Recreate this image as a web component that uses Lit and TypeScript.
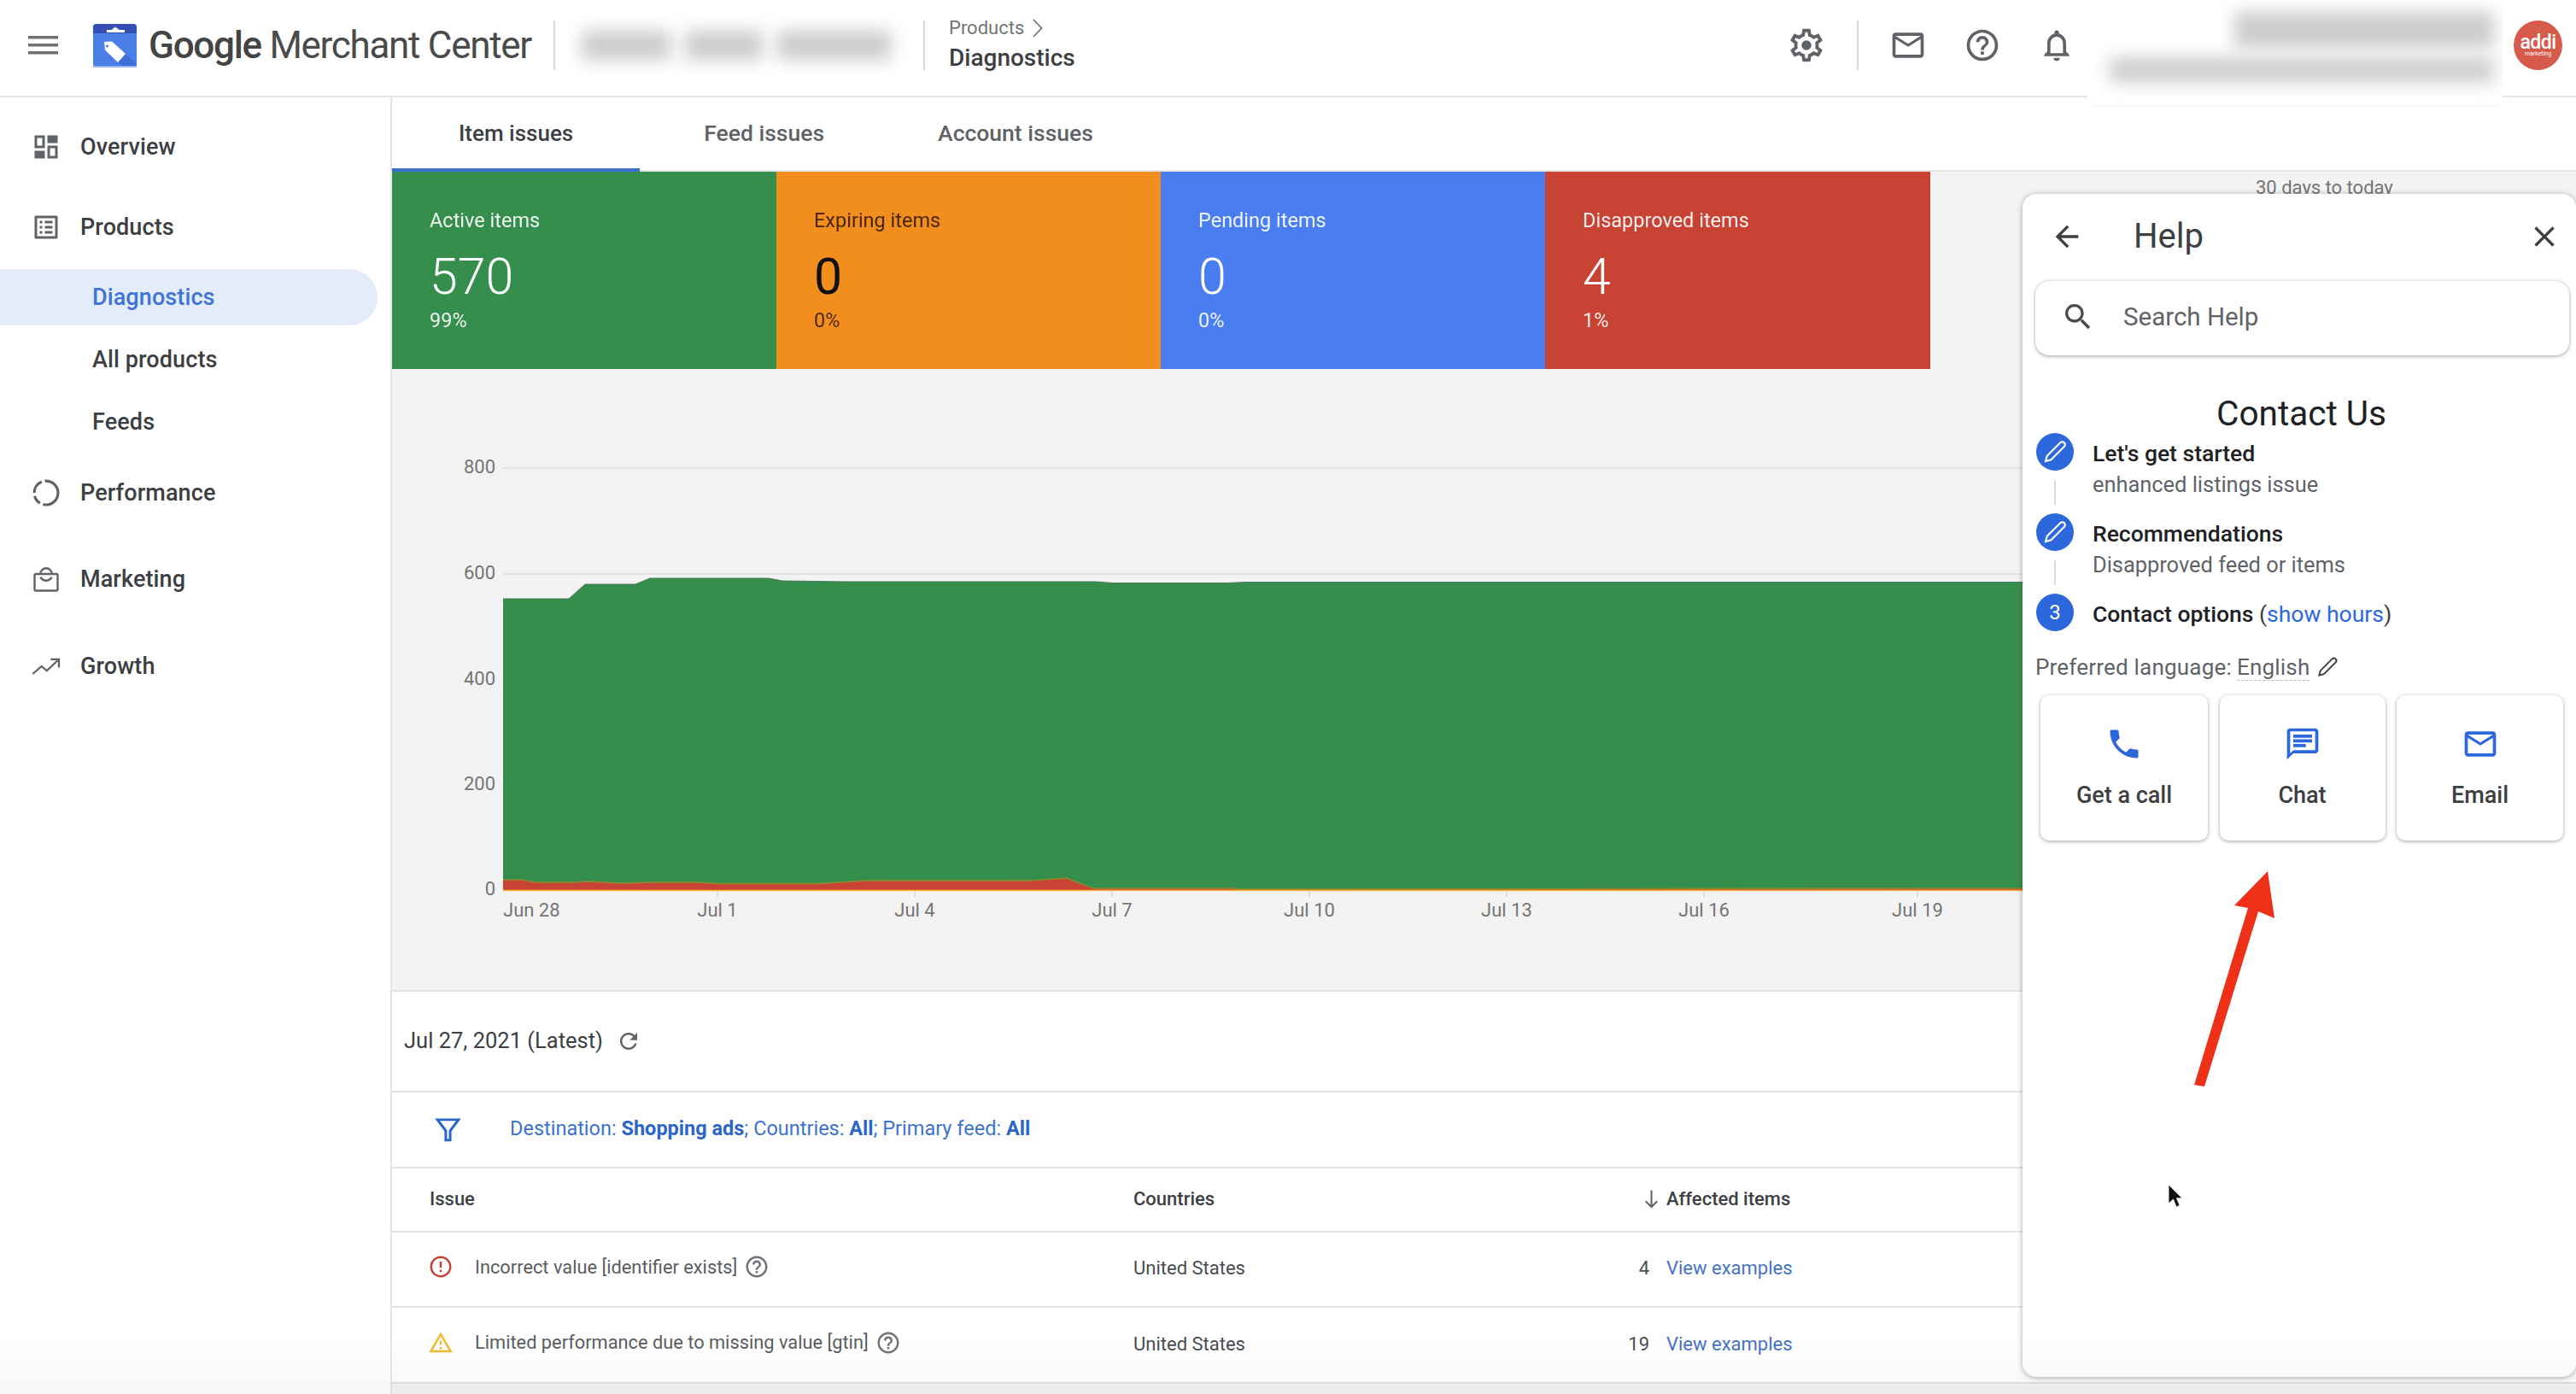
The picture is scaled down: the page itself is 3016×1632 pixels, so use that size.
import { LitElement, css, html, svg } from 'lit'
import { customElement } from 'lit/decorators.js'

const icons = {
  overview: svg`<path d="M3 3h8v10H3zm2 2v6h4V5zM13 3h8v6h-8zM3 15h8v6H3zM13 11h8v10h-8zm2 2v6h4v-6z" fill-rule="evenodd"/>`,
  products: svg`<path d="M19 5v14H5V5h14m1.100-2H3.900c-.5 0-.9.4-.9.9v16.200c0 .4.4.9.9.9h16.200c.4 0 .9-.5.9-.9V3.900c0-.5-.5-.9-.9-.9zM11 7h6v2h-6V7zm0 4h6v2h-6v-2zm0 4h6v2h-6zM7 7h2v2H7zm0 4h2v2H7zm0 4h2v2H7z"/>`,
  performance: svg`<circle cx="12" cy="12" r="9.300" fill="none" stroke="currentColor" stroke-width="2.100" stroke-dasharray="17 2.500 7 2.500 11 2.500 17 0"/>`,
  marketing: svg`<path d="M4 8h16a1 1 0 0 1 1 1v11a1 1 0 0 1-1 1H4a1 1 0 0 1-1-1V9a1 1 0 0 1 1-1zM7.500 8a4.500 4.500 0 0 1 9 0M7.500 10.500c2.500 3.500 6.500 3.500 9 0" fill="none" stroke="currentColor" stroke-width="1.600"/>`,
  growth: svg`<path d="M1.500 18l7-6 4 3.500 8.500-8M15.500 6.500H22V13" fill="none" stroke="currentColor" stroke-width="1.500"/>`,
  gear: svg`<path d="M19.430 12.980c.04-.32.07-.64.07-.98 0-.34-.03-.66-.07-.98l2.110-1.650c.19-.15.24-.42.12-.64l-2-3.460c-.09-.16-.26-.25-.44-.25-.06 0-.12.01-.17.03l-2.490 1c-.52-.4-1.080-.73-1.690-.98l-.38-2.650C14.460 2.180 14.250 2 14 2h-4c-.25 0-.46.18-.49.42l-.38 2.650c-.61.25-1.170.59-1.690.98l-2.490-1c-.06-.02-.12-.03-.18-.03-.17 0-.34.09-.43.25l-2 3.460c-.13.22-.07.49.12.64l2.110 1.650c-.04.32-.07.65-.07.98 0 .33.03.66.07.98l-2.110 1.650c-.19.15-.24.42-.12.64l2 3.460c.09.16.26.25.44.25.06 0 .12-.01.17-.03l2.490-1c.52.4 1.080.73 1.690.98l.38 2.650c.03.24.24.42.49.42h4c.25 0 .46-.18.49-.42l.38-2.650c.61-.25 1.170-.59 1.690-.98l2.490 1c.06.02.12.03.18.03.17 0 .34-.09.43-.25l2-3.460c.12-.22.07-.49-.12-.64l-2.110-1.650zm-1.980-1.710c.04.31.05.52.05.73 0 .21-.02.43-.05.73l-.14 1.130.89.7 1.080.84-.7 1.210-1.270-.51-1.040-.42-.9.68c-.43.32-.84.56-1.250.73l-1.060.43-.16 1.130-.2 1.350h-1.400l-.19-1.350-.16-1.130-1.060-.43c-.43-.18-.83-.41-1.230-.71l-.91-.7-1.060.43-1.270.51-.7-1.210 1.080-.84.89-.7-.14-1.130c-.03-.31-.05-.54-.05-.74s.02-.43.05-.73l.14-1.130-.89-.7-1.080-.84.7-1.210 1.270.51 1.040.42.9-.68c.43-.32.84-.56 1.250-.73l1.060-.43.16-1.130.2-1.350h1.390l.19 1.350.16 1.130 1.060.43c.43.18.83.41 1.230.71l.91.7 1.060-.43 1.270-.51.7 1.210-1.070.85-.89.7.14 1.130z"/><circle cx="12" cy="12" r="3"/>`,
  mail: svg`<path d="M20 4H4c-1.100 0-2 .9-2 2v12c0 1.100.9 2 2 2h16c1.100 0 2-.9 2-2V6c0-1.100-.9-2-2-2zm0 14H4V8l8 5 8-5v10zm-8-7L4 6h16l-8 5z"/>`,
  help: svg`<path d="M11 18h2v-2h-2v2zm1-16C6.480 2 2 6.480 2 12s4.480 10 10 10 10-4.480 10-10S17.520 2 12 2zm0 18c-4.410 0-8-3.590-8-8s3.590-8 8-8 8 3.590 8 8-3.590 8-8 8zm0-14c-2.210 0-4 1.790-4 4h2c0-1.100.9-2 2-2s2 .9 2 2c0 2-3 1.750-3 5h2c0-2.250 3-2.500 3-5 0-2.210-1.790-4-4-4z"/>`,
  bell: svg`<path d="M12 22c1.100 0 2-.9 2-2h-4c0 1.100.9 2 2 2zm6-6v-5c0-3.070-1.630-5.640-4.500-6.320V4c0-.83-.67-1.500-1.500-1.500s-1.500.67-1.500 1.500v.68C7.640 5.360 6 7.920 6 11v5l-2 2v1h16v-1l-2-2zm-2 1H8v-6c0-2.480 1.510-4.500 4-4.500s4 2.020 4 4.500v6z"/>`,
  back: svg`<path d="M20 11H7.830l5.590-5.590L12 4l-8 8 8 8 1.410-1.410L7.830 13H20v-2z"/>`,
  close: svg`<path d="M19 6.410L17.590 5 12 10.590 6.410 5 5 6.410 10.590 12 5 17.590 6.410 19 12 13.410 17.590 19 19 17.590 13.410 12z"/>`,
  search: svg`<path d="M15.500 14h-.79l-.28-.27C15.410 12.590 16 11.110 16 9.500 16 5.910 13.090 3 9.500 3S3 5.910 3 9.500 5.910 16 9.500 16c1.610 0 3.090-.59 4.230-1.570l.27.28v.79l5 4.990L20.490 19l-4.990-5zm-6 0C7.010 14 5 11.990 5 9.500S7.010 5 9.500 5 14 7.010 14 9.500 11.990 14 9.500 14z"/>`,
  pen: svg`<path transform="rotate(45 12 12)" d="M9.700 3.500a2.300 2.300 0 0 1 4.600 0V19L12 23l-2.300-4z" fill="none" stroke="currentColor" stroke-width="1.500"/>`,
  phone: svg`<path d="M6.620 10.790c1.440 2.830 3.760 5.140 6.590 6.590l2.200-2.200c.27-.27.67-.36 1.020-.24 1.120.37 2.330.57 3.570.57.55 0 1 .45 1 1V20c0 .55-.45 1-1 1-9.390 0-17-7.610-17-17 0-.55.45-1 1-1h3.500c.55 0 1 .45 1 1 0 1.250.2 2.450.57 3.570.11.35.03.74-.25 1.020l-2.200 2.200z"/>`,
  chat: svg`<path d="M20 2H4c-1.100 0-2 .9-2 2v18l4-4h14c1.100 0 2-.9 2-2V4c0-1.100-.9-2-2-2zm0 14H6l-2 2V4h16v12zM6 12h8v2H6zm0-3h12v2H6zm0-3h12v2H6z"/>`,
  refresh: svg`<path d="M17.650 6.350C16.200 4.900 14.210 4 12 4c-4.420 0-7.990 3.580-7.990 8s3.570 8 7.990 8c3.730 0 6.840-2.550 7.730-6h-2.080c-.82 2.330-3.040 4-5.650 4-3.310 0-6-2.690-6-6s2.690-6 6-6c1.660 0 3.140.69 4.220 1.780L13 11h7V4l-2.350 2.350z"/>`,
  filter: svg`<path d="M2.500 3h19L14 13v8.500h-4V13z" fill="none" stroke="currentColor" stroke-width="2.300"/>`,
  error: svg`<path d="M11 15h2v2h-2zm0-8h2v6h-2zm.99-5C6.470 2 2 6.480 2 12s4.470 10 9.990 10C17.520 22 22 17.520 22 12S17.520 2 11.990 2zM12 20c-4.420 0-8-3.580-8-8s3.580-8 8-8 8 3.580 8 8-3.580 8-8 8z"/>`,
  warning: svg`<path d="M12 5.990L19.530 19H4.470L12 5.990M12 2L1 21h22L12 2zm1 14h-2v2h2v-2zm0-6h-2v4h2v-4z"/>`,
  down: svg`<path d="M12 3v17M6 14.500l6 6 6-6" fill="none" stroke="currentColor" stroke-width="1.800"/>`,
  chevron: svg`<path d="M8 2l9.500 10L8 22" fill="none" stroke="currentColor" stroke-width="1.800"/>`,
}

type IconName = keyof typeof icons

const icon = (name: IconName, cls = '') =>
  html`<svg class="icon ${cls}" viewBox="0 0 24 24" fill="currentColor">${icons[name]}</svg>`

const stats = [
  { cls: 'green', label: 'Active items', value: '570', pct: '99%' },
  { cls: 'orange', label: 'Expiring items', value: '0', pct: '0%' },
  { cls: 'blue', label: 'Pending items', value: '0', pct: '0%' },
  { cls: 'red', label: 'Disapproved items', value: '4', pct: '1%' },
]

const yTicks = [
  { label: '800', y: 548 },
  { label: '600', y: 672 },
  { label: '400', y: 796 },
  { label: '200', y: 919 },
  { label: '0', y: 1042 },
]

const xTicks = [
  { label: 'Jul 1', x: 840 },
  { label: 'Jul 4', x: 1071 },
  { label: 'Jul 7', x: 1302 },
  { label: 'Jul 10', x: 1533 },
  { label: 'Jul 13', x: 1764 },
  { label: 'Jul 16', x: 1995 },
  { label: 'Jul 19', x: 2245 },
]

// stacked areas, in page coordinates
const greenTop = '589,701 666,701 685,684 744,684 761,677 900,677 916,680 989,681 1283,681 1302,682.500 1436,682.500 1460,681.500 2368,681.500'
const redTop = '589,1030 610,1030 629,1033 670,1033 690,1032 728,1034 766,1033 817,1033 843,1034.500 957,1034.500 1015,1031 1206,1031 1248,1028 1280,1040 1442,1040 1452,1041 2368,1040'

const issues = [
  { kind: 'error', text: 'Incorrect value [identifier exists]', count: '4' },
  { kind: 'warning', text: 'Limited performance due to missing value [gtin]', count: '19' },
] as const

@customElement('app-root')
export class AppRoot extends LitElement {
  static styles = css`
    :host {
      display: block;
      font-family: Roboto, "Liberation Sans", sans-serif;
      color: #3c4043;
    }

    .page {
      position: relative;
      width: 3016px;
      height: 1632px;
      overflow: hidden;
      background: #fff;
      display: flex;
      flex-direction: column;
    }

    .icon { display: block; flex: none; }

    /* header */
    .header {
      height: 114px;
      flex: none;
      box-sizing: border-box;
      display: flex;
      align-items: center;
      padding: 0 0 6px 33px;
      border-bottom: 2px solid #e6e6e6;
    }
    .menu { width: 35px; height: 22px; margin-right: 41px; flex: none; }
    .logo { width: 51px; height: 51px; margin-right: 14px; flex: none; }
    .brand {
      width: 474px;
      flex: none;
      font-size: 44px;
      letter-spacing: -1.300px;
      color: #4a4a4a;
      white-space: nowrap;
    }
    .brand b { font-weight: 500; color: #444; }
    .rule { width: 2px; height: 58px; background: #d8d8d8; flex: none; }
    .account {
      width: 431px;
      flex: none;
      box-sizing: border-box;
      padding-left: 31px;
      display: flex;
      gap: 17px;
    }
    .smudge { height: 34px; background: #cbcbcb; filter: blur(10px); }
    .smudge.a { width: 104px; }
    .smudge.b { width: 91px; }
    .smudge.c { width: 133px; }
    .crumbs { flex: 1; padding-left: 28px; }
    .crumb-top {
      display: flex;
      align-items: center;
      gap: 3px;
      font-size: 22px;
      line-height: 26px;
      color: #757575;
    }
    .crumb-top .icon { width: 24px; height: 26px; }
    .crumb-now { font-size: 28px; line-height: 36px; margin-top: 4px; font-weight: 500; color: #3c4043; }
    .tools { display: flex; align-items: center; color: #5f6368; }
    .tools .icon { width: 44px; height: 44px; margin-left: 43px; }
    .tools .gear { width: 46px; height: 46px; margin-left: 0; margin-right: 36px; }
    .tools .rule + .icon { margin-left: 36px; }
    .avatar {
      width: 57px;
      height: 58px;
      flex: none;
      margin-left: 513px;
      margin-right: 16px;
      border-radius: 50%;
      background: #d65b4b;
      color: #fff;
      display: flex;
      flex-direction: column;
      align-items: center;
      justify-content: center;
      font-size: 23px;
      line-height: 19px;
      font-weight: 500;
      letter-spacing: -0.500px;
    }
    .avatar small { font-size: 7px; line-height: 8px; font-weight: 400; letter-spacing: 0; }

    .redact {
      position: absolute;
      left: 2444px;
      top: 0;
      width: 486px;
      height: 123px;
      background: #fff;
      box-shadow: 0 1px 3px rgba(0, 0, 0, 0.03);
      overflow: hidden;
    }
    .redact .one { position: absolute; left: 172px; top: 14px; width: 304px; height: 42px; }
    .redact .two { position: absolute; left: 26px; top: 68px; width: 450px; height: 28px; }

    /* body */
    .body { flex: 1; display: flex; min-height: 0; }
    .side {
      width: 459px;
      flex: none;
      box-sizing: border-box;
      border-right: 2px solid #e6e6e6;
      padding-top: 25px;
    }
    .nav {
      height: 66px;
      display: flex;
      align-items: center;
      font-size: 27px;
      font-weight: 500;
      letter-spacing: 0.100px;
      color: #3c4043;
    }
    .top { padding-left: 36px; gap: 22px; }
    .top .icon { width: 36px; height: 36px; color: #5f6368; }
    .sub { padding-left: 108px; margin-top: 7px; margin-right: 15px; }
    .sub.active {
      background: #e3ecfb;
      color: #3f74d6;
      border-radius: 0 33px 33px 0;
      margin-top: 16px;
    }
    .products { margin-top: 28px; }
    .performance { margin-top: 17px; }
    .marketing { margin-top: 35px; }
    .growth { margin-top: 36px; }

    .main {
      flex: 1;
      min-width: 0;
      background: #f3f3f3;
      display: flex;
      flex-direction: column;
    }
    .tabs {
      height: 87px;
      flex: none;
      box-sizing: border-box;
      display: flex;
      background: #fff;
      border-bottom: 2px solid #e6e6e6;
    }
    .tab {
      display: flex;
      align-items: center;
      padding: 0 67px 4px 66px;
      font-size: 26.500px;
      color: #5f6368;
      font-weight: 500;
      margin-bottom: -2px;
    }
    .tab.active {
      padding: 0 78px;
      font-size: 26px;
      color: #3c4043;
      border-bottom: 4px solid #3e6fd0;
      box-sizing: border-box;
    }
    .tab.feed { padding-left: 75px; }

    .stats { display: flex; height: 231px; flex: none; }
    .stat {
      width: 450px;
      flex: none;
      box-sizing: border-box;
      padding: 42px 0 0 44px;
      color: #fff;
    }
    .stat.red { width: 451px; }
    .green { background: #368e4c; }
    .orange { background: #f28e1e; color: #3a1d00; }
    .blue { background: #4a7df0; }
    .red { background: #c84334; }
    .stat-label { font-size: 23.500px; line-height: 30px; opacity: 0.92; }
    .stat-value { font-size: 59px; line-height: 60px; font-weight: 300; margin-top: 21px; }
    .orange .stat-value { color: #111; font-weight: 400; }
    .stat-pct { font-size: 23.500px; line-height: 26px; margin-top: 8px; opacity: 0.9; }
    .range {
      padding: 5px 0 0 381px;
      font-size: 22px;
      line-height: 28px;
      color: #757575;
      white-space: nowrap;
    }

    .chart { width: 2557px; height: 727px; display: block; flex: none; }
    .chart text { font-family: Roboto, "Liberation Sans", sans-serif; font-size: 22px; fill: #757575; }

    .date {
      height: 116px;
      flex: none;
      display: flex;
      align-items: center;
      gap: 15px;
      padding-left: 14px;
      background: #fff;
      border-top: 2px solid #e3e3e3;
      font-size: 25.500px;
      color: #3c4043;
    }
    .date span { padding-bottom: 2px; }
    .date .icon { width: 30px; height: 30px; color: #5f6368; }
    .filter {
      height: 87px;
      flex: none;
      display: flex;
      align-items: center;
      padding-left: 50px;
      gap: 57px;
      background: #fff;
      border-top: 2px solid #e3e3e3;
      font-size: 23.500px;
      color: #3d72cf;
    }
    .filter .icon { width: 31px; height: 31px; color: #2a66c9; }
    .filter div { padding-bottom: 3px; }
    .filter b { font-weight: 700; color: #2a66c9; }

    .row {
      display: grid;
      grid-template-columns: 824px 770px;
      align-items: center;
      padding-left: 44px;
      height: 87px;
      background: #fff;
      border-top: 2px solid #e3e3e3;
      font-size: 22px;
      color: #4a4d50;
      flex: none;
    }
    .row.head { height: 73px; font-weight: 500; color: #3c4043; }
    .row.first { height: 86px; }
    .row > div { padding-bottom: 3px; }
    .cell-end { display: flex; justify-content: space-between; align-items: center; }
    .cell-end span { display: flex; align-items: center; }
    .head .icon { width: 27px; height: 27px; margin-right: 4px; color: #5f6368; }
    .issue { display: flex; align-items: center; font-size: 21.800px; }
    .row > .issue { padding-bottom: 6px; }
    .issue .kind { width: 30px; height: 30px; margin-left: -2px; margin-right: 25px; }
    .issue .error { color: #c5443a; }
    .issue .warning { color: #f4bb33; }
    .issue .hint { width: 30px; height: 30px; margin-left: 8px; color: #6f7276; }
    .issue span { color: #5a5d60; }
    .count { margin-right: 20px; }
    .link { width: 146px; flex: none; white-space: nowrap; }
    .row .view { color: #4672c4; }
    .tail { border-top: 2px solid #dfdfe3; }

    /* help panel */
    .panel {
      position: absolute;
      left: 2368px;
      top: 227px;
      right: 0;
      bottom: 20px;
      background: #fff;
      border-radius: 16px;
      box-shadow: 0 1px 6px rgba(60, 64, 67, 0.45);
      display: flex;
      flex-direction: column;
    }
    .panel-head {
      height: 102px;
      flex: none;
      box-sizing: border-box;
      display: flex;
      align-items: center;
      padding: 0 0 3px 32px;
      color: #3c4043;
    }
    .panel-head .icon { width: 40px; height: 40px; }
    .panel-title { font-size: 40px; margin-left: 58px; flex: 1; color: #3c4043; }
    .panel-head .close { margin-right: 17px; }
    .search {
      margin-left: 15px;
      width: 625px;
      height: 87px;
      flex: none;
      box-sizing: border-box;
      border-radius: 16px;
      box-shadow: 0 1px 4px rgba(60, 64, 67, 0.5);
      display: flex;
      align-items: center;
      padding: 0 0 3px 30px;
      gap: 33px;
      font-size: 29.500px;
      color: #5f6368;
    }
    .search .icon { width: 40px; height: 40px; color: #4a4d50; }
    .contact {
      margin: 43px 0 -1px 5px;
      font-size: 40.500px;
      line-height: 50px;
      text-align: center;
      color: #202124;
    }
    .steps { margin: -1px 0 0 16px; }
    .step { display: flex; gap: 22px; height: 94px; }
    .step:last-child { height: 44px; }
    .rail { width: 44px; flex: none; display: flex; flex-direction: column; align-items: center; }
    .dot {
      width: 44px;
      height: 44px;
      flex: none;
      border-radius: 50%;
      background: #2d67dc;
      color: #fff;
      display: flex;
      align-items: center;
      justify-content: center;
      font-size: 24px;
    }
    .dot .icon { width: 34px; height: 34px; }
    .stem { width: 2px; height: 29px; margin-top: 11px; background: #dadce0; }
    .step-text { padding-top: 10px; }
    .step-title { font-size: 26.500px; line-height: 28px; font-weight: 500; color: #202124; white-space: nowrap; }
    .step-title span { font-weight: 400; color: #3c4043; }
    .step-title a { color: #2d67dc; font-weight: 400; }
    .step-sub { font-size: 25.400px; line-height: 36px; margin-top: 4px; color: #5f6368; }
    .lang {
      margin: 26px 0 0 15px;
      display: flex;
      align-items: center;
      font-size: 26px;
      line-height: 32px;
      letter-spacing: 0.200px;
      color: #5f6368;
    }
    .lang u { text-decoration: none; border-bottom: 1px dashed #bbb; line-height: 30px; margin-left: 6px; }
    .lang .icon { width: 30px; height: 30px; margin-left: 6px; color: #3c4043; }
    .ways {
      display: grid;
      grid-template-columns: 196px 194px 195px;
      gap: 13.500px;
      margin: 17px 0 0 21px;
    }
    .way {
      height: 170px;
      box-sizing: border-box;
      border-radius: 10px;
      box-shadow: 0 1px 4px rgba(60, 64, 67, 0.5);
      display: flex;
      flex-direction: column;
      align-items: center;
      padding-top: 35px;
      gap: 23px;
      font-size: 27px;
      line-height: 30px;
      font-weight: 500;
      color: #3c4043;
    }
    .way .icon { width: 44px; height: 44px; color: #2d67dc; }

    .pointer { position: absolute; left: 2560px; top: 1015px; width: 110px; height: 262px; }
    .cursor { position: absolute; left: 2538px; top: 1386px; width: 18px; height: 30px; }
    .fade {
      position: absolute;
      left: 0;
      right: 0;
      bottom: 0;
      height: 70px;
      background: linear-gradient(rgba(0, 0, 0, 0), rgba(0, 0, 0, 0.03));
      pointer-events: none;
    }
  `

  private renderHeader () {
    return html`
      <header class="header">
        <svg class="menu" viewBox="0 0 35 22" fill="#707070">
          <rect y="0" width="35" height="3.500"/><rect y="9" width="35" height="3.500"/><rect y="18" width="35" height="3.500"/>
        </svg>
        <svg class="logo" viewBox="0 0 51 51">
          <rect width="51" height="51" rx="4" fill="#4a7fe8"/>
          <path d="M20 20L51 47v0a4 4 0 0 1-4 4H36L14 30z" fill="#3f6fd6"/>
          <path d="M0 4a4 4 0 0 1 4-4h43a4 4 0 0 1 4 4v7H0z" fill="#3450b4"/>
          <path d="M16 10V7h5.500L26 3.500 30.500 7H37v3z" fill="#fff"/>
          <path fill-rule="evenodd" d="M13 21l9-.5L38 35l-9 10L14 30.500zM16.500 24.500a1.500 1.500 0 1 0 .01 0z" fill="#fff"/>
          <rect y="49" width="51" height="2" fill="#8fb6f5"/>
        </svg>
        <div class="brand"><b>Google</b> Merchant Center</div>
        <div class="rule"></div>
        <div class="account">
          <div class="smudge a"></div>
          <div class="smudge b"></div>
          <div class="smudge c"></div>
        </div>
        <div class="rule"></div>
        <div class="crumbs">
          <div class="crumb-top">Products ${icon('chevron')}</div>
          <div class="crumb-now">Diagnostics</div>
        </div>
        <div class="tools">
          ${icon('gear', 'gear')}
          <div class="rule"></div>
          ${icon('mail')}
          ${icon('help')}
          ${icon('bell')}
        </div>
        <div class="avatar">addi<small>marketing</small></div>
      </header>
    `
  }

  private renderSide () {
    return html`
      <nav class="side">
        <div class="nav top">${icon('overview')}Overview</div>
        <div class="nav top products">${icon('products')}Products</div>
        <div class="nav sub active">Diagnostics</div>
        <div class="nav sub">All products</div>
        <div class="nav sub">Feeds</div>
        <div class="nav top performance">${icon('performance')}Performance</div>
        <div class="nav top marketing">${icon('marketing')}Marketing</div>
        <div class="nav top growth">${icon('growth')}Growth</div>
      </nav>
    `
  }

  private renderChart () {
    return html`
      <svg class="chart" viewBox="459 432 2557 727">
        ${yTicks.map(t => svg`
          <line x1="589" x2="2368" y1=${t.y} y2=${t.y} stroke="#e2e2e2" stroke-width="2"/>
          <text x="580" y=${t.y + 6} text-anchor="end">${t.label}</text>
        `)}
        ${xTicks.map(t => svg`
          <line x1=${t.x} x2=${t.x} y1="1042" y2="1050" stroke="#d8d8d8" stroke-width="1.500"/>
          <text x=${t.x} y="1073" text-anchor="middle">${t.label}</text>
        `)}
        <text x="589" y="1073">Jun 28</text>
        <polygon points="${greenTop} 2368,1042 589,1042" fill="#368e4c"/>
        <polyline points=${greenTop} fill="none" stroke="#4c7a5c" stroke-width="1"/>
        <polygon points="${redTop} 2368,1042 589,1042" fill="#c84334"/>
        <polyline points=${redTop} fill="none" stroke="#8f8a2e" stroke-width="1.500"/>
        <line x1="589" x2="2368" y1="1042.500" y2="1042.500" stroke="#f6b73c" stroke-width="1.500"/>
      </svg>
    `
  }

  private renderTable () {
    return html`
      <div class="date"><span>Jul 27, 2021 (Latest)</span>${icon('refresh')}</div>
      <div class="filter">
        ${icon('filter')}
        <div>Destination: <b>Shopping ads</b>; Countries: <b>All</b>; Primary feed: <b>All</b></div>
      </div>
      <div class="row head">
        <div>Issue</div>
        <div class="cell-end">
          <span>Countries</span>
          <span>${icon('down')}<span class="link">Affected items</span></span>
        </div>
      </div>
      ${issues.map((i, n) => html`
        <div class="row ${n === 0 ? 'first' : ''}">
          <div class="issue">
            ${icon(i.kind, `kind ${i.kind}`)}
            <span>${i.text}</span>
            ${icon('help', 'hint')}
          </div>
          <div class="cell-end">
            <span>United States</span>
            <span><span class="count">${i.count}</span><span class="link view">View examples</span></span>
          </div>
        </div>
      `)}
      <div class="tail"></div>
    `
  }

  private renderPanel () {
    return html`
      <aside class="panel">
        <div class="panel-head">
          ${icon('back')}
          <div class="panel-title">Help</div>
          ${icon('close', 'close')}
        </div>
        <div class="search">${icon('search')}Search Help</div>
        <div class="contact">Contact Us</div>
        <div class="steps">
          <div class="step">
            <div class="rail"><div class="dot">${icon('pen')}</div><div class="stem"></div></div>
            <div class="step-text">
              <div class="step-title">Let's get started</div>
              <div class="step-sub">enhanced listings issue</div>
            </div>
          </div>
          <div class="step">
            <div class="rail"><div class="dot">${icon('pen')}</div><div class="stem"></div></div>
            <div class="step-text">
              <div class="step-title">Recommendations</div>
              <div class="step-sub">Disapproved feed or items</div>
            </div>
          </div>
          <div class="step">
            <div class="rail"><div class="dot">3</div></div>
            <div class="step-text">
              <div class="step-title">Contact options <span>(</span><a>show hours</a><span>)</span></div>
            </div>
          </div>
        </div>
        <div class="lang">Preferred language: <u>English</u>${icon('pen')}</div>
        <div class="ways">
          <div class="way">${icon('phone')}Get a call</div>
          <div class="way">${icon('chat')}Chat</div>
          <div class="way">${icon('mail')}Email</div>
        </div>
      </aside>
    `
  }

  render () {
    return html`
      <div class="page">
        ${this.renderHeader()}
        <div class="body">
          ${this.renderSide()}
          <main class="main">
            <div class="tabs">
              <div class="tab active">Item issues</div>
              <div class="tab feed">Feed issues</div>
              <div class="tab">Account issues</div>
            </div>
            <div class="stats">
              ${stats.map(s => html`
                <div class="stat ${s.cls}">
                  <div class="stat-label">${s.label}</div>
                  <div class="stat-value">${s.value}</div>
                  <div class="stat-pct">${s.pct}</div>
                </div>
              `)}
              <div class="range">30 days to today</div>
            </div>
            ${this.renderChart()}
            ${this.renderTable()}
          </main>
        </div>
        <div class="redact">
          <div class="smudge one"></div>
          <div class="smudge two"></div>
        </div>
        ${this.renderPanel()}
        <svg class="pointer" viewBox="2560 1015 110 262">
          <polygon points="2655,1020 2663,1075 2644,1067 2581,1272 2569,1270 2632,1063 2616,1060" fill="#ef3019"/>
        </svg>
        <svg class="cursor" viewBox="0 0 18 30">
          <path d="M1 1v22l5.500-5 3.500 9 4-1.700-3.600-8.500H17z" fill="#111" stroke="#fff" stroke-width="0.800"/>
        </svg>
        <div class="fade"></div>
      </div>
    `
  }
}
